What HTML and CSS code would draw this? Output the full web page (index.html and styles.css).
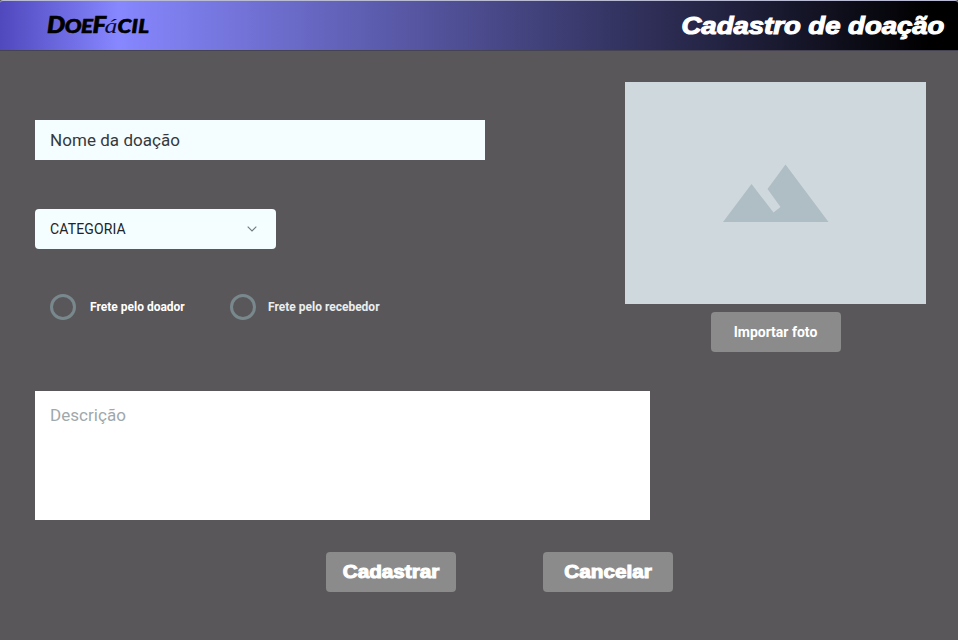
FILE: index.html
```html
<!DOCTYPE html>
<html lang="pt-BR">
<head>
<meta charset="utf-8">
<title>DoeFácil - Cadastro de doação</title>
<link rel="stylesheet" href="styles.css">
</head>
<body>
<header class="topbar">
  <div class="logo"><span class="mark">D<small>OE</small>F</span><i>á</i><span class="mark tail"><small>CIL</small></span></div>
  <h1 class="title">Cadastro de doação</h1>
</header>
<main class="page">
  <div class="upper">
    <div class="fields">
      <div class="name-field">Nome da doação</div>
      <div class="select">
        <span class="select-label">CATEGORIA</span>
        <svg class="chevron" width="10" height="6" viewBox="0 0 10 6"><path d="M.7.7 5 5 9.3.7" fill="none" stroke="#71797c" stroke-width="1.1"/></svg>
      </div>
      <div class="radios">
        <div class="radio first"><span class="ring"></span><span class="radio-label">Frete pelo doador</span></div>
        <div class="radio second"><span class="ring"></span><span class="radio-label">Frete pelo recebedor</span></div>
      </div>
    </div>
    <div class="photo-column">
      <div class="photo">
        <svg width="106" height="58" viewBox="0 0 106 58"><path d="M0 58 28.500 20 50.500 48.500 57.500 43 44.500 25 62.500 .5 105.500 58Z" fill="#afbdc4"/></svg>
      </div>
      <div class="button import"><span>Importar foto</span></div>
    </div>
  </div>
  <div class="description">Descrição</div>
  <div class="actions">
    <div class="button heavy"><span>Cadastrar</span></div>
    <div class="button heavy"><span>Cancelar</span></div>
  </div>
</main>
</body>
</html>
```
FILE: styles.css
```css
* { box-sizing: border-box; }
body {
  margin: 0;
  height: 640px;
  overflow: hidden;
  background: #5a575a;
  font-family: Roboto, "Liberation Sans", sans-serif;
}
.topbar {
  display: flex;
  justify-content: space-between;
  align-items: center;
  height: 51px;
  padding: 0 14px 0 47px;
  border-top: 1px solid #b9bbd5;
  border-bottom: 1px solid #454252;
  border-radius: 3px 3px 0 0;
  background: linear-gradient(90deg, #5048bd 0, #8787ff 118px, #000 930px);
}
.logo {
  display: flex;
  align-items: baseline;
  height: 28px;
  margin-top: -2px;
  line-height: 28px;
  white-space: nowrap;
  color: #000;
  transform: scaleX(1.17);
  transform-origin: left;
}
.mark {
  font: italic 900 22px/28px Lato, sans-serif;
  letter-spacing: -.4px;
  -webkit-text-stroke: .6px #000;
}
.mark small { font-size: 19px; }
.tail { letter-spacing: .3px; }
.logo i {
  margin-left: -1px;
  font: italic 22px/28px "Liberation Serif", serif;
  color: #0a0a38;
}
.title {
  margin: 0;
  color: #fff;
  font: italic bold 24px/30px "Liberation Sans", sans-serif;
  -webkit-text-stroke: 1.1px #fff;
  transform: scaleX(1.146);
  transform-origin: right;
}
.page { padding: 31px 32px 0 35px; }
.upper {
  display: flex;
  justify-content: space-between;
  height: 309px;
}
.fields { padding-top: 38px; }
.name-field {
  width: 450px;
  height: 40px;
  padding-left: 15px;
  background: #f4fdff;
  color: #34393b;
  font-size: 17px;
  letter-spacing: .05px;
  line-height: 41px;
}
.select {
  display: flex;
  align-items: center;
  justify-content: space-between;
  width: 241px;
  height: 40px;
  margin-top: 49px;
  padding: 0 19px 0 15px;
  border-radius: 4px;
  background: #f4fdff;
  color: #202426;
  font-size: 14px;
  letter-spacing: .15px;
}
.radios {
  display: flex;
  margin: 44px 0 0 15px;
}
.radio { display: flex; align-items: center; height: 27px; }
.first { width: 180px; }
.ring {
  width: 26px;
  height: 26px;
  margin-right: 14px;
  border: 3px solid #78888c;
  border-radius: 50%;
}
.second .ring { margin: 1px 12px 0 0; }
.radio-label {
  color: #fff;
  font-size: 12px;
  font-weight: 700;
  white-space: nowrap;
}
.second .radio-label { color: #e9eeee; }
.photo-column {
  display: flex;
  flex-direction: column;
  align-items: center;
  width: 301px;
}
.photo {
  display: flex;
  align-items: center;
  justify-content: center;
  width: 301px;
  height: 222px;
  background: #cfd8dd;
}
.button {
  display: flex;
  align-items: center;
  justify-content: center;
  width: 130px;
  height: 40px;
  border-radius: 4px;
  background: #8b8b8b;
  color: #fff;
  white-space: nowrap;
}
.import {
  margin-top: 8px;
  font-size: 14px;
  font-weight: 700;
}
.description {
  width: 615px;
  height: 129px;
  padding: 13px 15px;
  background: #fff;
  color: #9fa8ab;
  font-size: 17px;
  letter-spacing: .05px;
  line-height: 22px;
}
.actions {
  display: flex;
  gap: 87px;
  margin: 32px 0 0 291px;
}
.heavy {
  font: bold 18px/24px "Liberation Sans", sans-serif;
  -webkit-text-stroke: 1px #fff;
}
.heavy span { transform: scaleX(1.15); }
```
